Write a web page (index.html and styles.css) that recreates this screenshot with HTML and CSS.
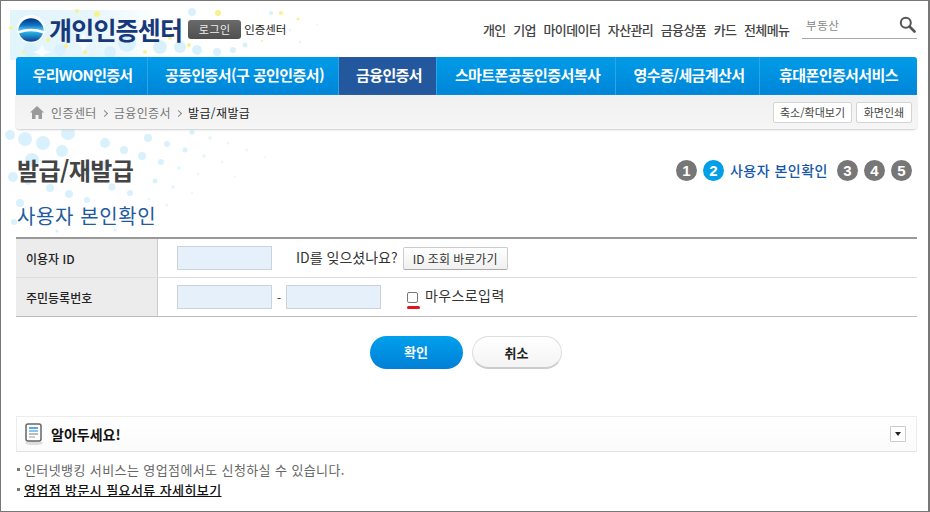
FILE: index.html
```html
<!DOCTYPE html>
<html lang="ko">
<head>
<meta charset="utf-8">
<title>발급/재발급</title>
<link rel="stylesheet" href="styles.css">
</head>
<body>
<div class="frame">
  <svg class="deco" width="470" height="320" viewBox="1 1 470 320" aria-hidden="true">
    <defs>
      <linearGradient id="fade" x1="0" y1="0" x2="1" y2="0"><stop offset="0" stop-color="#e2f4fc"/><stop offset="0.55" stop-color="#e6f6fc"/><stop offset="1" stop-color="#e6f6fc" stop-opacity="0"/></linearGradient>
    </defs>
    <rect x="10" y="10" width="150" height="50" fill="url(#fade)"/>
    <g fill="#d9f1fc">
      <circle cx="127" cy="43" r="9"/><circle cx="160" cy="47" r="7"/><circle cx="180" cy="47" r="6"/><circle cx="197" cy="50" r="5"/><circle cx="217" cy="52" r="4"/><circle cx="233" cy="50" r="3"/><circle cx="245" cy="45" r="2.500"/><circle cx="192" cy="12" r="4"/><circle cx="271" cy="13" r="2"/>
      <circle cx="110" cy="52" r="6"/><circle cx="60" cy="50" r="6"/><circle cx="30" cy="50" r="7"/>
      <circle cx="10" cy="135" r="5"/><circle cx="25" cy="139" r="7"/><circle cx="43" cy="143" r="7"/><circle cx="68" cy="133" r="7"/><circle cx="105" cy="143" r="5"/><circle cx="124" cy="150" r="4"/><circle cx="148" cy="138" r="4"/><circle cx="167" cy="144" r="3"/><circle cx="185" cy="150" r="2.500"/><circle cx="62" cy="151" r="6"/><circle cx="32" cy="160" r="7"/><circle cx="142" cy="156" r="4"/><circle cx="161" cy="162" r="3"/><circle cx="155" cy="181" r="2.500"/><circle cx="130" cy="193" r="3"/><circle cx="112" cy="187" r="3.500"/><circle cx="87" cy="200" r="3"/><circle cx="69" cy="194" r="4"/><circle cx="50" cy="188" r="4"/><circle cx="13" cy="177" r="5"/><circle cx="28" cy="182" r="3"/><circle cx="20" cy="203" r="4"/><circle cx="192" cy="132" r="2.500"/>
      <circle cx="85" cy="170" r="5"/><circle cx="105" cy="165" r="4"/><circle cx="14" cy="222" r="3"/><circle cx="40" cy="215" r="3"/><circle cx="57" cy="231" r="1.500"/><circle cx="115" cy="230" r="1.500"/>
    </g>
    <g fill="#e8f7fd">
      <circle cx="179" cy="168" r="2"/><circle cx="204" cy="156" r="2"/><circle cx="222" cy="162" r="1.500"/><circle cx="198" cy="174" r="1.500"/><circle cx="149" cy="199" r="1.500"/><circle cx="173" cy="187" r="2"/><circle cx="192" cy="193" r="1"/><circle cx="167" cy="205" r="1.500"/><circle cx="210" cy="138" r="2"/><circle cx="228" cy="143" r="1.500"/><circle cx="247" cy="150" r="1.500"/><circle cx="265" cy="157" r="1"/><circle cx="235" cy="177" r="1"/>
      <circle cx="300" cy="42" r="1.500"/><circle cx="317" cy="25" r="1"/><circle cx="290" cy="30" r="1.500"/>
    </g>
    <g fill="#f6f38e">
      <circle cx="218" cy="13" r="3"/><circle cx="281" cy="13" r="2"/><circle cx="97" cy="14" r="3"/><circle cx="77" cy="11" r="2"/><circle cx="11" cy="28" r="2"/><circle cx="48" cy="40" r="2"/><circle cx="66" cy="46" r="2"/><circle cx="85" cy="52" r="2"/><circle cx="170" cy="38" r="2"/><circle cx="189" cy="45" r="2"/><circle cx="145" cy="52" r="2"/><circle cx="23" cy="52" r="1.500"/><circle cx="240" cy="35" r="1.500"/><circle cx="298" cy="19" r="1.500"/><circle cx="262" cy="41" r="1"/>
    </g>
    <g fill="#f7fcfe">
      <path d="M83 33l4 7l6 2l-6 3l-4 7l-3-7l-6-3l6-2Z"/><path d="M42 44l3 6l6 2l-6 2l-3 5l-3-5l-6-2l6-2Z"/>
    </g>
  </svg>

  <header class="top">
    <div class="brand">
      <svg class="logo" width="28" height="28" viewBox="0 0 28 28" aria-hidden="true">
        <defs>
          <linearGradient id="lt" x1="0" y1="0" x2="0" y2="1"><stop offset="0" stop-color="#0c2f80"/><stop offset="0.55" stop-color="#0c74c4"/><stop offset="1" stop-color="#6fd2f5"/></linearGradient>
          <linearGradient id="lb" x1="0" y1="0" x2="0" y2="1"><stop offset="0" stop-color="#2cc0ee"/><stop offset="1" stop-color="#0c3f90"/></linearGradient>
        </defs>
        <circle cx="14" cy="14" r="14" fill="#fff"/>
        <path d="M1.200 16A12.800 12.800 0 0 1 26.800 16Q14 11.500 1.200 16Z" fill="url(#lt)"/>
        <path d="M2 18.500Q14 13.800 26 18.500A12.900 12.900 0 0 1 2 18.500Z" fill="url(#lb)"/>
      </svg>
      <span class="brand-name">개인인증센터</span>
      <a class="login">로그인</a>
      <span class="crumb-title">인증센터</span>
    </div>
    <nav class="gnb">
      <a>개인</a><a>기업</a><a>마이데이터</a><a>자산관리</a><a>금융상품</a><a>카드</a><a>전체메뉴</a>
    </nav>
    <div class="search">
      <span>부동산</span>
      <svg width="17" height="17" viewBox="0 0 17 17" aria-hidden="true"><circle cx="6.800" cy="6.800" r="5" fill="none" stroke="#555" stroke-width="2"/><path d="M10.500 10.500L15.500 15.500" stroke="#555" stroke-width="2.600" stroke-linecap="round"/></svg>
    </div>
  </header>

  <div class="menu">
    <a class="m1">우리WON인증서</a>
    <a class="m2">공동인증서(구 공인인증서)</a>
    <a class="m3 on">금융인증서</a>
    <a class="m4">스마트폰공동인증서복사</a>
    <a class="m5">영수증/세금계산서</a>
    <a class="m6">휴대폰인증서서비스</a>
  </div>

  <div class="path">
    <svg width="14" height="13" viewBox="0 0 14 13" aria-hidden="true"><path d="M7 0L14 6.500H12V13H8.500V9H5.500V13H2V6.500H0Z" fill="#9a9a9a"/></svg>
    <span>인증센터</span><i class="sep"></i><span>금융인증서</span><i class="sep"></i><b>발급/재발급</b>
    <div class="path-btns"><a class="zoom">축소/확대보기</a><a class="print">화면인쇄</a></div>
  </div>

  <div class="title-row">
    <h1>발급/재발급</h1>
    <ol class="steps">
      <li>1</li><li class="on">2</li><li class="label">사용자 본인확인</li><li>3</li><li>4</li><li>5</li>
    </ol>
  </div>

  <h2>사용자 본인확인</h2>

  <div class="form">
    <div class="row">
      <div class="th">이용자 ID</div>
      <div class="td">
        <span class="inp"></span>
        <span class="forgot">ID를 잊으셨나요?</span>
        <a class="idbtn">ID 조회 바로가기</a>
      </div>
    </div>
    <div class="row">
      <div class="th">주민등록번호</div>
      <div class="td">
        <span class="inp"></span><span class="dash">-</span><span class="inp"></span>
        <span class="check"><i></i></span>
        <span class="mouse">마우스로입력</span>
      </div>
    </div>
  </div>

  <div class="actions">
    <a class="ok">확인</a>
    <a class="cancel">취소</a>
  </div>

  <div class="notice">
    <svg width="18" height="22" viewBox="0 0 18 22" aria-hidden="true">
      <ellipse cx="9" cy="20" rx="9" ry="2" fill="#ddd"/>
      <rect x="1" y="1" width="15" height="17" rx="2" fill="#fff" stroke="#666" stroke-width="1.500"/>
      <rect x="4" y="4" width="9" height="2" fill="#5aa9ea"/><rect x="4" y="7" width="9" height="2" fill="#8cc4f0"/><rect x="4" y="10" width="9" height="2" fill="#bbb"/><rect x="4" y="13" width="6" height="2" fill="#ccc"/>
    </svg>
    <strong>알아두세요!</strong>
    <a class="toggle"><i></i></a>
  </div>

  <ul class="notes">
    <li>인터넷뱅킹 서비스는 영업점에서도 신청하실 수 있습니다.</li>
    <li><a>영업점 방문시 필요서류 자세히보기</a></li>
  </ul>
</div>
</body>
</html>
```

FILE: styles.css
```css
* { box-sizing: border-box; }
html, body { margin: 0; padding: 0; background: #fff; }
body { font-family: "Noto Sans CJK KR", "Liberation Sans", sans-serif; color: #222; }
.frame { position: relative; width: 930px; height: 512px; overflow: hidden; border: 1px solid #777; border-right-width: 2px; padding: 0 11px 0 15px; }
ol, ul { list-style: none; margin: 0; padding: 0; }
h1, h2 { margin: 0; font-weight: 400; }
.deco { position: absolute; left: 0; top: 0; }

.top { position: relative; display: flex; align-items: center; height: 56px; }
.brand { display: flex; align-items: center; width: 467px; }
.logo { flex: none; margin-left: 1px; }
.brand-name { margin-left: 4px; font-size: 25px; line-height: 30px; font-weight: 700; color: #17397b; letter-spacing: -0.8px; white-space: nowrap; }
.login { margin-left: 6px; width: 53px; height: 19px; border-radius: 3px; background: linear-gradient(#6a6a6a, #4f4f4f); color: #eee; font-size: 11px; line-height: 19px; text-align: center; letter-spacing: 0.5px; }
.crumb-title { margin-left: 3px; font-size: 11.500px; color: #222; letter-spacing: -0.1px; }
.gnb { display: flex; gap: 7.500px; font-size: 13px; font-weight: 500; color: #444; letter-spacing: -0.6px; white-space: nowrap; width: 319px; padding-top: 1px; }
.search { display: flex; align-items: center; justify-content: space-between; width: 115px; height: 26px; margin-top: -6px; padding: 0 1px 2px 4px; border-bottom: 1px solid #aaa; font-size: 11.500px; color: #888; letter-spacing: 0.6px; }

.menu { position: relative; display: flex; height: 38px; border-radius: 3px 3px 0 0; background: linear-gradient(#009ce8, #0085d8); overflow: hidden; }
.menu a { display: block; height: 38px; padding-left: 3px; color: #fff; font-size: 15px; font-weight: 700; line-height: 36px; text-align: center; letter-spacing: -0.6px; white-space: nowrap; border-left: 1px solid #2ea4e6; }
.menu .m1 { width: 131px; padding-left: 2px; border-left: 0; letter-spacing: -0.7px; }
.menu .m2 { width: 191px; }
.menu .m3 { width: 98px; }
.menu .m4 { width: 179px; }
.menu .m5 { width: 144px; }
.menu .m6 { width: 158px; padding-left: 0; }
.menu .on { background: #23589f; }

.path { position: relative; display: flex; align-items: center; height: 34px; padding: 0 5px 0 14px; background: linear-gradient(#f0f0f0, #f6f6f6); border-radius: 0 0 4px 4px; box-shadow: 0 1px 2px #ccc; font-size: 12px; letter-spacing: 0.4px; color: #777; }
.path span:first-of-type { margin-left: 7px; }
.path b { font-weight: 400; color: #222; }
.sep { width: 5px; height: 5px; margin: 2px 7px 0 5px; border-top: 1px solid #888; border-right: 1px solid #888; transform: rotate(45deg); }
.path-btns { display: flex; gap: 4px; margin-left: auto; }
.path-btns a { height: 21px; border: 1px solid #d4d4d4; border-radius: 2px; background: #fff; color: #444; font-size: 11px; letter-spacing: 0; line-height: 19px; text-align: center; white-space: nowrap; }
.path-btns .zoom { width: 79px; }
.path-btns .print { width: 56px; }

.title-row { position: relative; display: flex; justify-content: space-between; align-items: center; height: 40px; margin-top: 21px; }
h1 { margin-left: 1px; font-size: 24px; font-weight: 700; color: #444; letter-spacing: -0.6px; line-height: 38px; }
.steps { display: flex; align-items: center; gap: 6px; margin-right: 5px; }
.steps li { width: 21px; height: 21px; border-radius: 50%; background: #777; color: #fff; font: 700 15px/21px "Liberation Sans", sans-serif; text-align: center; }
.steps li.on { background: #009fe8; }
.steps li.label { width: auto; height: auto; margin: 0 3px 0 0; border-radius: 0; background: none; color: #1558a8; font: 500 14px/21px "Noto Sans CJK KR", sans-serif; letter-spacing: 0.5px; }

h2 { position: relative; margin: 13px 0 8px 1px; font-size: 20px; line-height: 26px; color: #1f5b9e; letter-spacing: 0.6px; }

.form { position: relative; border-top: 2px solid #999; border-bottom: 1px solid #bbb; }
.row { display: flex; height: 38px; }
.row + .row { height: 39px; border-top: 1px solid #ddd; }
.th { display: flex; align-items: center; width: 142px; padding-left: 10px; background: #ececec; border-right: 1px solid #ccc; font-size: 12px; font-weight: 500; color: #222; letter-spacing: 0; }
.td { display: flex; align-items: center; padding-left: 19px; background: #fff; flex: 1; font-size: 14px; color: #333; }
.inp { width: 95px; height: 24px; background: #e6f0fa; border: 1px solid #ccd3da; }
.forgot { margin-left: 24px; margin-top: -3px; white-space: nowrap; }
.idbtn { margin-left: 5px; width: 105px; height: 23px; border: 1px solid #ccc; border-bottom-color: #aaa; border-radius: 2px; background: linear-gradient(#fff, #f0f0f0); font-size: 12px; line-height: 21px; text-align: center; color: #333; }
.dash { width: 14px; text-align: center; font-size: 12px; }
.check { position: relative; width: 11px; height: 11px; margin: 0 0 0 26px; border: 1px solid #777; border-radius: 2px; }
.check i { position: absolute; left: -1px; top: 13px; width: 13px; height: 3px; border-radius: 2px; background: #e1141c; }
.mouse { margin: -4px 0 0 7px; letter-spacing: 0.4px; }

.actions { position: relative; display: flex; justify-content: center; gap: 9px; margin-top: 19px; padding-right: 2px; }
.actions a { height: 33px; border-radius: 17px; font-size: 13px; font-weight: 700; line-height: 31px; text-align: center; }
.ok { width: 93px; background: linear-gradient(#00a0ec, #0080d6); color: #fff; }
.cancel { width: 90px; background: linear-gradient(#fff, #f4f4f4); border: 1px solid #ddd; border-bottom: 2px solid #ccc; color: #222; }

.notice { display: flex; align-items: center; height: 36px; margin-top: 47px; padding: 0 10px 0 8px; background: linear-gradient(#fff, #fbfbfb); border: 1px solid #ececec; border-bottom-color: #e2e2e2; }
.notice strong { margin-left: 8px; font-size: 14px; font-weight: 700; color: #111; letter-spacing: 0; }
.toggle { display: flex; align-items: center; justify-content: center; width: 16px; height: 16px; margin-left: auto; background: #fff; border: 1px solid #ccc; border-radius: 1px; }
.toggle i { width: 0; height: 0; border: 3px solid transparent; border-top: 4px solid #222; border-bottom: 0; }

.notes { margin-top: 8px; font-size: 13px; line-height: 20px; color: #666; letter-spacing: 0.4px; }
.notes li { position: relative; padding-left: 8px; }
.notes li::before { content: ""; position: absolute; left: 1px; top: 8px; width: 3px; height: 3px; background: #777; }
.notes a { color: #111; font-weight: 500; text-decoration: underline; }
```
